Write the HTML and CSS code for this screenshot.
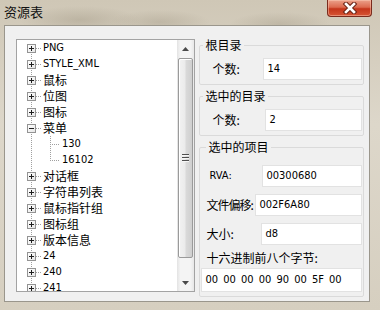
FILE: index.html
```html
<!DOCTYPE html>
<html lang="zh-CN">
<head>
    <meta charset="UTF-8">
    <meta name="viewport" content="width=device-width, initial-scale=1.0">
    <title>资源表</title>
    <link rel="stylesheet" href="styles.css">
</head>
<body>
    <div class="window">
        <div class="titlebar">
            <span class="title">资源表</span>
            <button class="close-btn" type="button" aria-label="关闭">
                <svg width="16" height="12" viewBox="0 0 16 12">
                    <path d="M4 2 L12 10 M12 2 L4 10" stroke="#6b2416" stroke-width="4.6" stroke-linecap="square"/>
                    <path d="M4 2 L12 10 M12 2 L4 10" stroke="#ffffff" stroke-width="2.6" stroke-linecap="square"/>
                </svg>
            </button>
        </div>

        <div class="client">
            <div class="tree">
                <ul class="tree-list">
                    <li class="node"><span class="expander"></span><span class="branch"></span><span class="latin">PNG</span></li>
                    <li class="node"><span class="expander"></span><span class="branch"></span><span class="latin">STYLE_XML</span></li>
                    <li class="node"><span class="expander"></span><span class="branch"></span><span>鼠标</span></li>
                    <li class="node"><span class="expander"></span><span class="branch"></span><span>位图</span></li>
                    <li class="node"><span class="expander"></span><span class="branch"></span><span>图标</span></li>
                    <li class="node"><span class="expander open"></span><span class="branch"></span><span>菜单</span></li>
                    <li>
                        <ul class="children">
                            <li class="child"><span class="elbow"></span><span class="latin">130</span></li>
                            <li class="child last"><span class="elbow"></span><span class="latin">16102</span></li>
                        </ul>
                    </li>
                    <li class="node"><span class="expander"></span><span class="branch"></span><span>对话框</span></li>
                    <li class="node"><span class="expander"></span><span class="branch"></span><span>字符串列表</span></li>
                    <li class="node"><span class="expander"></span><span class="branch"></span><span>鼠标指针组</span></li>
                    <li class="node"><span class="expander"></span><span class="branch"></span><span>图标组</span></li>
                    <li class="node"><span class="expander"></span><span class="branch"></span><span>版本信息</span></li>
                    <li class="node"><span class="expander"></span><span class="branch"></span><span class="latin">24</span></li>
                    <li class="node"><span class="expander"></span><span class="branch"></span><span class="latin">240</span></li>
                    <li class="node"><span class="expander"></span><span class="branch"></span><span class="latin">241</span></li>
                </ul>

                <div class="scrollbar">
                    <div class="scroll-btn">
                        <svg width="7" height="4" viewBox="0 0 7 4"><path d="M0 4 L3.5 0 L7 4 Z" fill="#4a4a4a"/></svg>
                    </div>
                    <div class="scroll-track">
                        <div class="scroll-thumb"><span class="grip"></span></div>
                    </div>
                    <div class="scroll-btn">
                        <svg width="7" height="4" viewBox="0 0 7 4"><path d="M0 0 L7 0 L3.5 4 Z" fill="#4a4a4a"/></svg>
                    </div>
                </div>
            </div>

            <div class="panel">
                <fieldset class="group">
                    <legend>根目录</legend>
                    <div class="field">
                        <span class="field-label">个数:</span>
                        <div class="field-input">14</div>
                    </div>
                </fieldset>

                <fieldset class="group">
                    <legend>选中的目录</legend>
                    <div class="field field--second">
                        <span class="field-label">个数:</span>
                        <div class="field-input">2</div>
                    </div>
                </fieldset>

                <fieldset class="group group--item">
                    <legend>选中的项目</legend>
                    <div class="field field--rva">
                        <span class="field-label latin">RVA:</span>
                        <div class="field-input">00300680</div>
                    </div>
                    <div class="field field--wide">
                        <span class="field-label">文件偏移:</span>
                        <div class="field-input">002F6A80</div>
                    </div>
                    <div class="field field--tight">
                        <span class="field-label">大小:</span>
                        <div class="field-input">d8</div>
                    </div>
                    <div class="hex-label">十六进制前八个字节:</div>
                    <div class="hex-box">00 00 00 00 90 00 5F 00</div>
                </fieldset>
            </div>
        </div>
    </div>
</body>
</html>
```

FILE: styles.css
```css
* {
    box-sizing: border-box;
}

body {
    margin: 0;
    font-family: "Noto Sans CJK SC", sans-serif;
}

.window {
    width: 380px;
    height: 310px;
    overflow: hidden;
    background:
        radial-gradient(ellipse 60px 14px at 80px 20px, rgba(150, 140, 120, 0.35), transparent),
        radial-gradient(ellipse 50px 12px at 160px 22px, rgba(150, 140, 120, 0.3), transparent),
        radial-gradient(ellipse 50px 12px at 280px 24px, rgba(150, 140, 120, 0.3), transparent),
        linear-gradient(to bottom, #cfc7b6, #ddd7ca 40%, #d6cfc0);
}

/* title bar */

.titlebar {
    height: 25px;
    display: flex;
    justify-content: space-between;
    align-items: flex-start;
}

.title {
    margin: 3px 0 0 4px;
    font-size: 13px;
    line-height: 17px;
    color: #111;
}

.close-btn {
    width: 45px;
    height: 17px;
    margin-right: 8px;
    padding: 0;
    border: 1px solid #7a2b1d;
    border-top: none;
    border-radius: 0 0 4px 4px;
    background: linear-gradient(to bottom, #eba18a, #dc6a4f 45%, #c4351a 55%, #d65535);
    box-shadow: inset 0 0 0 1px rgba(255, 210, 190, 0.45);
    display: flex;
    align-items: center;
    justify-content: center;
}

/* client area */

.client {
    width: 366px;
    height: 277px;
    margin-left: 4px;
    padding: 11px 5px 0 11px;
    border: 1px solid #9a968c;
    background: #f0f0f0;
    display: flex;
    align-items: flex-start;
    gap: 4px;
}

/* tree view */

.tree {
    width: 180px;
    height: 253px;
    margin-top: 2px;
    border: 1px solid #a3a3a3;
    background: #fff;
    display: flex;
}

.tree-list {
    flex: 1;
    margin: 0;
    padding: 0;
    list-style: none;
    overflow: hidden;
    font-size: 12px;
    line-height: 16px;
    color: #000;
    background: repeating-linear-gradient(to bottom, #a0a0a0 0 1px, transparent 1px 2px) 14px 8px / 1px 100% no-repeat;
}

.node {
    height: 16px;
    display: flex;
    align-items: center;
    white-space: nowrap;
}

.expander {
    width: 9px;
    height: 9px;
    margin-left: 10px;
    border: 1px solid #939393;
    background:
        linear-gradient(#1e1e1e, #1e1e1e) center / 5px 1px no-repeat,
        linear-gradient(#1e1e1e, #1e1e1e) center / 1px 5px no-repeat,
        linear-gradient(135deg, #fff, #e6e6e6);
}

.expander.open {
    background:
        linear-gradient(#1e1e1e, #1e1e1e) center / 5px 1px no-repeat,
        linear-gradient(135deg, #fff, #e6e6e6);
}

.branch {
    width: 6px;
    height: 1px;
    margin-right: 1px;
    background: repeating-linear-gradient(to right, #a0a0a0 0 1px, transparent 1px 2px);
}

.latin {
    font-family: "DejaVu Sans Condensed", "DejaVu Sans", sans-serif;
    font-size: 11px;
}

.children {
    margin: 0;
    padding: 0;
    list-style: none;
}

.child {
    height: 16px;
    padding-left: 33px;
    display: flex;
    align-items: center;
}

.elbow {
    width: 10px;
    height: 16px;
    margin-right: 2px;
    background:
        repeating-linear-gradient(to bottom, #a0a0a0 0 1px, transparent 1px 2px) left top / 1px 100% no-repeat,
        repeating-linear-gradient(to right, #a0a0a0 0 1px, transparent 1px 2px) left 8px / 100% 1px no-repeat;
}

.child.last .elbow {
    background-size: 1px 9px, 100% 1px;
}

/* scrollbar */

.scrollbar {
    width: 17px;
    display: flex;
    flex-direction: column;
    background: linear-gradient(to right, #e3e3e3, #f4f4f4 20%, #f4f4f4 80%, #e8e8e8);
}

.scroll-btn {
    height: 17px;
    display: flex;
    align-items: center;
    justify-content: center;
}

.scroll-track {
    flex: 1;
    padding: 1px 1px 0;
}

.scroll-thumb {
    width: 15px;
    height: 200px;
    border: 1px solid #9a9a9a;
    border-radius: 2px;
    background: linear-gradient(to right, #f2f2f2, #ebebeb 45%, #d9d9d9 55%, #cfcfcf);
    box-shadow: inset 1px 1px 0 #fff;
    display: flex;
    align-items: center;
    justify-content: center;
}

.grip {
    width: 7px;
    height: 8px;
    background: repeating-linear-gradient(to bottom, #4f4f4f 0 1px, #f6f6f6 1px 2px, transparent 2px 3px);
}

/* right panel */

.panel {
    width: 165px;
    display: flex;
    flex-direction: column;
    gap: 3px;
    font-size: 12px;
    line-height: 16px;
    color: #000;
}

.group {
    margin: 0;
    padding: 5px 1px 4px 1px;
    border: 1px solid #dadada;
    border-radius: 2px;
    min-width: 0;
}

.group legend {
    margin-left: 2px;
    padding: 0 2px;
    line-height: 16px;
}

.group--item {
    padding-top: 10px;
    display: flex;
    flex-direction: column;
    gap: 7px;
}

.group--item legend {
    margin-left: 5px;
}

.field {
    height: 22px;
    display: flex;
    align-items: center;
}

.field-label {
    width: 62px;
    padding-left: 11px;
    white-space: nowrap;
    flex-shrink: 0;
}

.field--second .field-label {
    width: 64px;
}

.field--rva .field-label {
    width: 61px;
    padding-left: 8px;
}

.field--wide .field-label {
    width: 54px;
    padding-left: 5px;
    letter-spacing: -1px;
}

.field--tight .field-label {
    width: 60px;
    padding-left: 5px;
}

.field-input {
    flex: 1;
    height: 22px;
    padding-left: 3px;
    border: 1px solid #e2e2e2;
    background: #fff;
    font-family: "DejaVu Sans Condensed", "DejaVu Sans", sans-serif;
    font-size: 11px;
    line-height: 20px;
}

.hex-label {
    height: 16px;
    padding-left: 5px;
    margin-top: -2px;
}

.hex-box {
    height: 24px;
    margin-top: -5px;
    padding-left: 3px;
    border: 1px solid #e2e2e2;
    background: #fff;
    font-family: "DejaVu Sans Condensed", "DejaVu Sans", sans-serif;
    font-size: 11px;
    line-height: 22px;
    word-spacing: 2px;
    white-space: nowrap;
}
```
